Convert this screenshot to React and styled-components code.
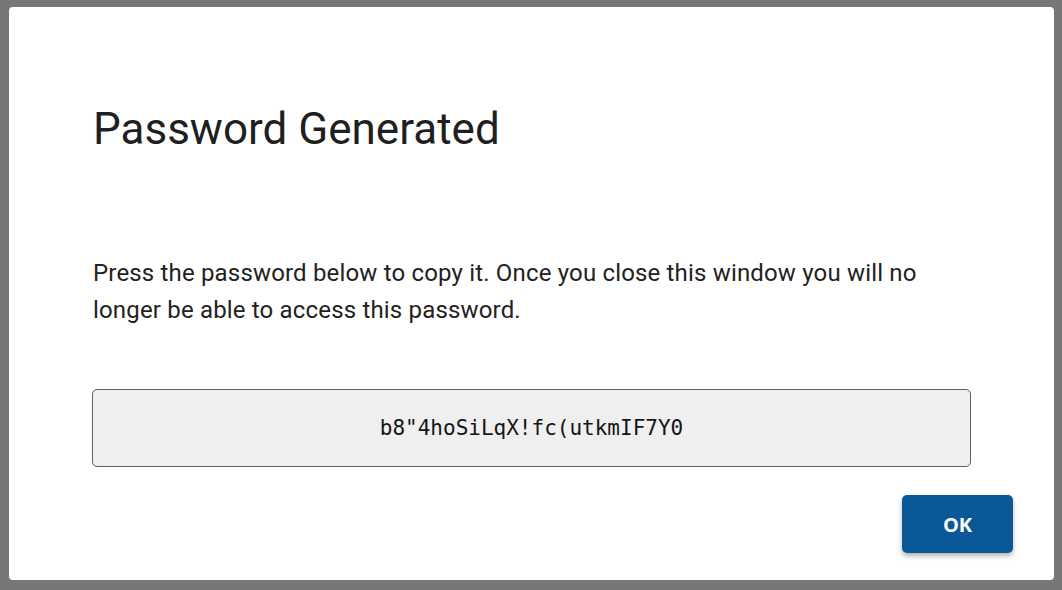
import React from "react";
import styled, { createGlobalStyle } from "styled-components";

const Global = createGlobalStyle`
  html, body { margin: 0; padding: 0; }
  body {
    background: #777777;
    font-family: Roboto, "Noto Sans", Arial, sans-serif;
  }
`;

const Backdrop = styled.div`
  box-sizing: border-box;
  width: 1062px;
  height: 590px;
  padding: 7px 8px 10px 9px;
  display: flex;
`;

const Dialog = styled.div`
  flex: 1;
  background: #ffffff;
  border-radius: 4px;
  display: flex;
  flex-direction: column;
`;

const Content = styled.div`
  padding: 96px 83px 0 84px;
  display: flex;
  flex-direction: column;
`;

const Title = styled.h2`
  margin: 0;
  font-size: 44px;
  font-weight: 400;
  line-height: 52px;
  color: #1f1f1f;
`;

const Message = styled.p`
  margin: 100px 0 0;
  font-size: 24px;
  letter-spacing: 0.17px;
  line-height: 37px;
  color: #222222;
`;

const PasswordBox = styled.button`
  margin: 60px 0 0 -1px;
  height: 78px;
  box-sizing: border-box;
  background: #efeff0;
  border: 1.5px solid #5f5f5f;
  border-radius: 5px;
  font-family: "DejaVu Sans Mono", "Liberation Mono", monospace;
  font-size: 21px;
  color: #151515;
  cursor: pointer;
`;

const Actions = styled.div`
  flex: 1;
  display: flex;
  justify-content: flex-end;
  align-items: flex-end;
  padding: 0 41px 27px 0;
`;

const OkButton = styled.button`
  width: 111px;
  height: 58px;
  background: #0b5899;
  color: #ffffff;
  border: none;
  border-radius: 5px;
  font-family: "Open Sans", Roboto, sans-serif;
  font-weight: 700;
  font-size: 20px;
  box-shadow: 0 3px 5px rgba(0, 0, 0, 0.3);
  cursor: pointer;
`;

export default function App() {
  return (
    <>
      <Global />
      <Backdrop>
        <Dialog>
          <Content>
            <Title>Password Generated</Title>
            <Message>
              Press the password below to copy it. Once you close this window you will no
              longer be able to access this password.
            </Message>
            <PasswordBox>b8"4hoSiLqX!fc(utkmIF7Y0</PasswordBox>
          </Content>
          <Actions>
            <OkButton>OK</OkButton>
          </Actions>
        </Dialog>
      </Backdrop>
    </>
  );
}
